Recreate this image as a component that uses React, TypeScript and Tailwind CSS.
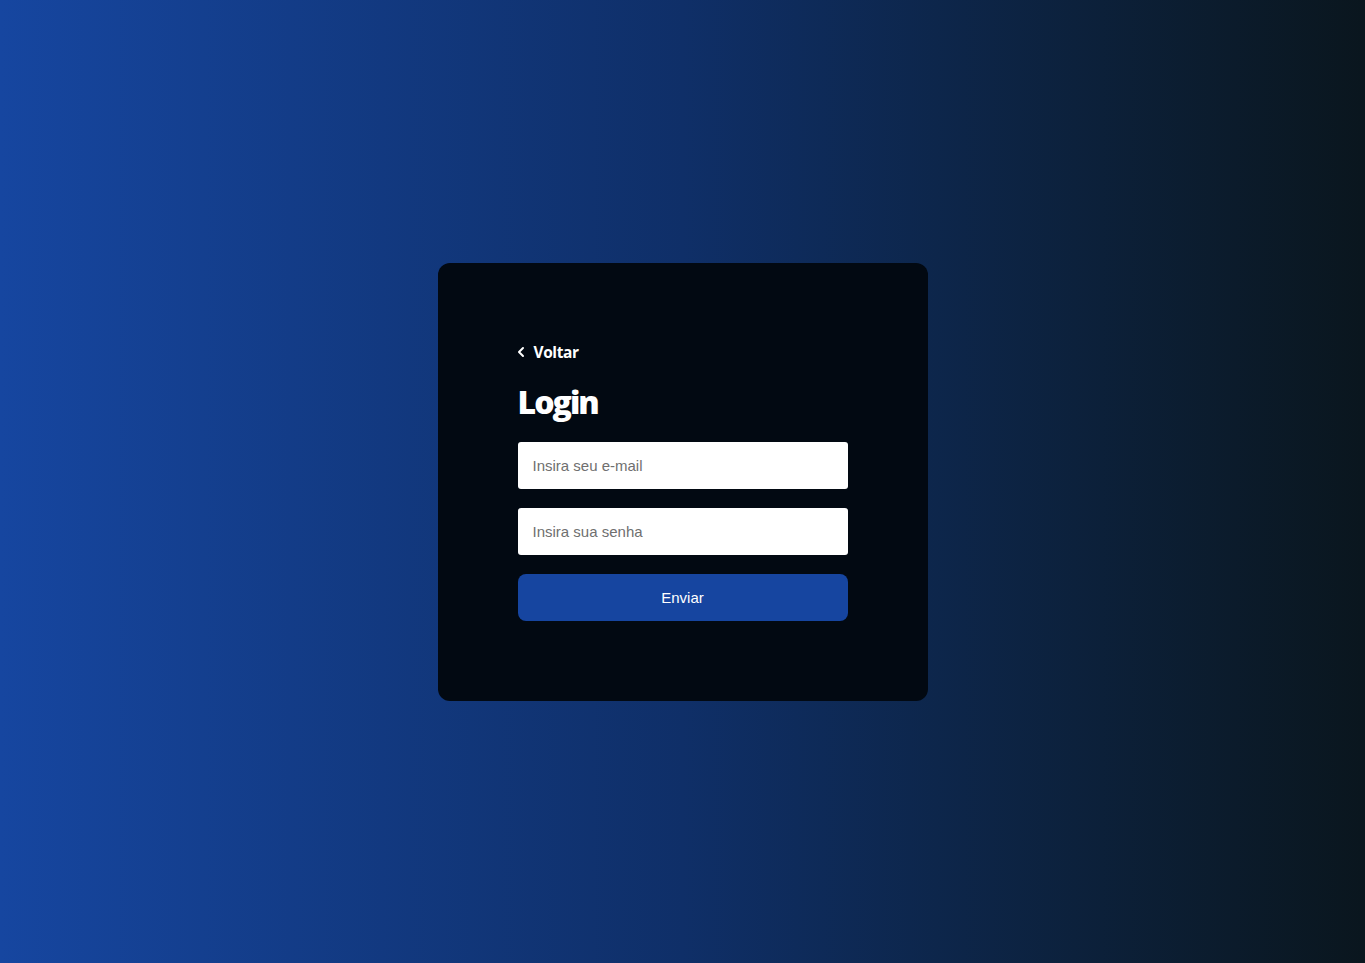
import { ChevronLeft } from "lucide-react";

export default function App() {
  return (
    <div className="flex min-h-screen w-full items-center justify-center bg-gradient-to-r from-[#1646a0] via-[#0f2f68] to-[#0a161e] font-['Liberation_Sans',Arial,sans-serif]">
      <div className="flex w-[490px] flex-col rounded-xl bg-[#020912] px-20 py-20">
        <button
          type="button"
          className="flex items-center gap-[5px] self-start font-['Open_Sans',sans-serif] text-[15.5px] font-bold leading-[18px] tracking-[-0.4px] text-white"
        >
          <ChevronLeft size={16} strokeWidth={3} className="-ml-[5px]" />
          Voltar
        </button>
        <h1 className="mt-[22px] font-['Open_Sans',sans-serif] text-[32px] font-extrabold leading-[38px] tracking-[-2px] text-white">
          Login
        </h1>
        <form className="mt-[21px] flex flex-col gap-[19px]" onSubmit={(e) => e.preventDefault()}>
          <input
            type="email"
            placeholder="Insira seu e-mail"
            className="h-[47px] w-full rounded-[3px] bg-white px-[15px] text-[15px] text-gray-700 outline-none placeholder:text-[#6f6f6f]"
          />
          <input
            type="password"
            placeholder="Insira sua senha"
            className="h-[47px] w-full rounded-[3px] bg-white px-[15px] text-[15px] text-gray-700 outline-none placeholder:text-[#6f6f6f]"
          />
          <button
            type="submit"
            className="h-[47px] w-full rounded-lg bg-[#1645a0] pt-[2px] text-[15px] text-white"
          >
            Enviar
          </button>
        </form>
      </div>
    </div>
  );
}
